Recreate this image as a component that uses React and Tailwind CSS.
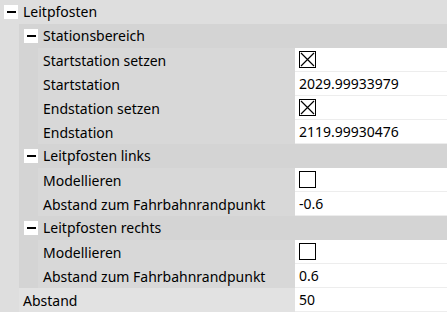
const font = { fontFamily: '"Noto Sans", "Open Sans", sans-serif' };

function Minus() {
  return (
    <span className="flex h-[14px] w-[14px] shrink-0 items-center justify-center bg-white">
      <span className="h-[2px] w-[9px] bg-black" />
    </span>
  );
}

function Check({ on }) {
  return (
    <span className="relative block h-[17px] w-[17px] border border-black bg-white">
      {on && (
        <svg className="absolute inset-0" width="15" height="15" viewBox="0 0 15 15">
          <path d="M1 1L14 14M14 1L1 14" stroke="black" strokeWidth="1.2" />
        </svg>
      )}
    </span>
  );
}

function Header({ title, bg }) {
  return (
    <div className={`flex h-[24px] items-center gap-[5px] pl-[5px] ${bg}`}>
      <Minus />
      <span className="leading-none">{title}</span>
    </div>
  );
}

function Row({ label, value, check, labelBg, labelPad }) {
  return (
    <div className="flex h-[24px]">
      <div className={`flex flex-1 items-center ${labelPad} ${labelBg}`}>{label}</div>
      <div className="flex w-[152px] items-center border-b border-[#ededed] bg-white pl-[4px]">
        {check !== undefined ? <Check on={check} /> : value}
      </div>
    </div>
  );
}

function Group({ title, rows }) {
  return (
    <div>
      <Header title={title} bg="bg-[#d4d4d4]" />
      <div className="flex bg-[#d4d4d4]">
        <div className="w-[19px] shrink-0" />
        <div className="flex-1">
          {rows.map((r) => (
            <Row key={r.label} {...r} labelBg="bg-[#d8d8d8]" labelPad="pl-[5px]" />
          ))}
        </div>
      </div>
    </div>
  );
}

export default function App() {
  return (
    <div className="h-[312px] w-[447px] overflow-hidden bg-[#dedede] text-[14px] text-black" style={font}>
      <div className="flex h-[24px] items-center gap-[5px] pl-[4px]">
        <Minus />
        <span className="leading-none">Leitpfosten</span>
      </div>
      <div className="flex">
        <div className="w-[19px] shrink-0" />
        <div className="flex-1">
          <Group
            title="Stationsbereich"
            rows={[
              { label: "Startstation setzen", check: true },
              { label: "Startstation", value: "2029.99933979" },
              { label: "Endstation setzen", check: true },
              { label: "Endstation", value: "2119.99930476" },
            ]}
          />
          <Group
            title="Leitpfosten links"
            rows={[
              { label: "Modellieren", check: false },
              { label: "Abstand zum Fahrbahnrandpunkt", value: "-0.6" },
            ]}
          />
          <Group
            title="Leitpfosten rechts"
            rows={[
              { label: "Modellieren", check: false },
              { label: "Abstand zum Fahrbahnrandpunkt", value: "0.6" },
            ]}
          />
          <Row label="Abstand" value="50" labelBg="bg-[#e2e2e2]" labelPad="pl-[4px]" />
        </div>
      </div>
    </div>
  );
}
